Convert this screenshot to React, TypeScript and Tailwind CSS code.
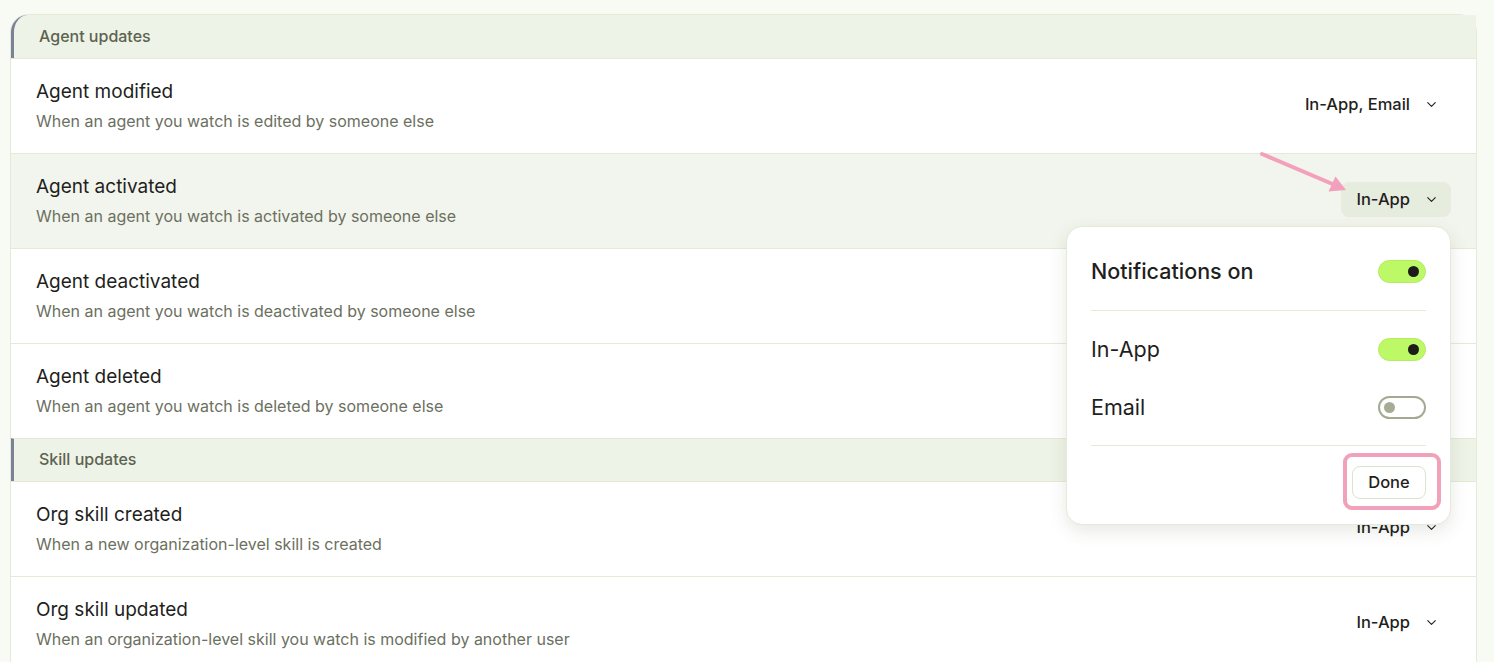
import React from "react";
import { ChevronDown } from "lucide-react";

type Row = { title: string; desc: string; value: string; active?: boolean };

const sections: { heading: string; rows: Row[] }[] = [
  {
    heading: "Agent updates",
    rows: [
      { title: "Agent modified", desc: "When an agent you watch is edited by someone else", value: "In-App, Email" },
      { title: "Agent activated", desc: "When an agent you watch is activated by someone else", value: "In-App", active: true },
      { title: "Agent deactivated", desc: "When an agent you watch is deactivated by someone else", value: "In-App" },
      { title: "Agent deleted", desc: "When an agent you watch is deleted by someone else", value: "In-App" },
    ],
  },
  {
    heading: "Skill updates",
    rows: [
      { title: "Org skill created", desc: "When a new organization-level skill is created", value: "In-App" },
      { title: "Org skill updated", desc: "When an organization-level skill you watch is modified by another user", value: "In-App" },
    ],
  },
];

const Toggle = ({ on }: { on: boolean }) =>
  on ? (
    <div className="flex h-[23px] w-[48px] items-center justify-end rounded-full border border-[#b3ec5c] bg-[#bdf966] pr-[6px]">
      <div className="h-[11px] w-[11px] rounded-full bg-[#1c1c1a]" />
    </div>
  ) : (
    <div className="flex h-[23px] w-[48px] items-center rounded-full border-2 border-[#a4aa92] bg-white pl-[4px]">
      <div className="h-[11px] w-[11px] rounded-full bg-[#a7ac95]" />
    </div>
  );

const Popover = () => (
  <div className="absolute right-0 top-full z-10 mt-[9px] w-[385px] rounded-2xl border border-[#e3ead8] bg-white px-6 pb-[25px] pt-[28px] shadow-[0_6px_18px_rgba(60,70,40,0.12)]">
    <div className="flex h-8 items-center justify-between">
      <span className="text-[21.5px] font-medium text-[#1f1f1d]">Notifications on</span>
      <Toggle on />
    </div>
    <div className="mt-[23px] h-px bg-[#e3ead8]" />
    <div className="mt-[22px] flex h-8 items-center justify-between">
      <span className="text-[21.5px] text-[#1f1f1d]">In-App</span>
      <Toggle on />
    </div>
    <div className="mt-[26px] flex h-8 items-center justify-between">
      <span className="text-[21.5px] text-[#1f1f1d]">Email</span>
      <Toggle on={false} />
    </div>
    <div className="mt-[22px] h-px bg-[#e3ead8]" />
    <div className="mt-[20px] flex justify-end">
      <div className="relative">
        <button className="h-[33px] w-[74px] rounded-lg border border-[#dbe4cd] bg-white text-[16.5px] font-medium text-[#1f1f1d]">
          Done
        </button>
        <div className="pointer-events-none absolute -bottom-[11px] -left-[9px] -right-[15px] -top-[13px] rounded-[9px] border-4 border-[#f1a1b9]" />
      </div>
    </div>
  </div>
);

const Arrow = () => (
  <svg className="pointer-events-none absolute left-[-85px] top-[-33px]" width="95" height="45" viewBox="0 0 95 45">
    <line x1="6" y1="5" x2="80" y2="36.5" stroke="#f2a0bc" strokeWidth="4" strokeLinecap="round" />
    <polygon points="90,41 72.5,42.5 79.5,27.5" fill="#f2a0bc" />
  </svg>
);

export default function App() {
  return (
    <div className="min-h-[662px] overflow-hidden bg-[#f8faf4] pl-[10px] pr-[17px] pt-[14px] font-['Inter',sans-serif]">
      <div className="rounded-t-[18px] border border-[#e3ebd8] bg-white">
        {sections.map((s, si) => (
          <div key={si}>
            <div
              className={`flex h-[43px] items-center border-l-[3px] border-[#7b8298] bg-[#eef3e7] pl-[25px] pb-[2px] text-[16px] font-medium text-[#5c6351] ${si === 0 ? "rounded-tl-[17px]" : "border-t border-t-[#e3ebd8]"}`}
            >
              {s.heading}
            </div>
            {s.rows.map((r, ri) => (
              <div
                key={ri}
                className={`flex h-[95px] items-center justify-between border-t border-[#e3ebd8] pl-[25px] pr-[25px] ${r.active ? "bg-[#f2f5ed]" : ""}`}
              >
                <div className="flex flex-col">
                  <span className="text-[19px] leading-[26px] text-[#1f1f1d]">{r.title}</span>
                  <span className="mt-[4px] text-[16px] leading-[24px] text-[#6c705f]">{r.desc}</span>
                </div>
                <div className="relative -mt-[3px]">
                  <div
                    className={`flex h-[35px] items-center gap-[14px] rounded-lg pl-[15px] pr-[12px] text-[16.5px] font-medium text-[#1f1f1d] ${r.active ? "bg-[#e6ecde]" : ""}`}
                  >
                    <span>{r.value}</span>
                    <ChevronDown size={15} strokeWidth={1.75} />
                  </div>
                  {r.active && (
                    <>
                      <Arrow />
                      <Popover />
                    </>
                  )}
                </div>
              </div>
            ))}
          </div>
        ))}
      </div>
    </div>
  );
}
